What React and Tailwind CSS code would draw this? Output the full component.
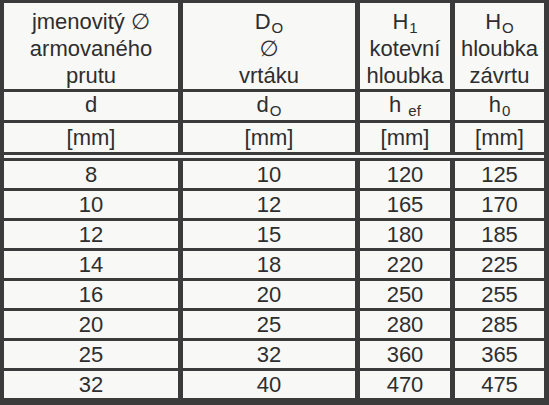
const headTop = [
  [<>jmenovitý ∅</>, <>armovaného</>, <>prutu</>],
  [<>D<Sub>O</Sub></>, <>∅</>, <>vrtáku</>],
  [<>H<Sub>1</Sub></>, <>kotevní</>, <>hloubka</>],
  [<>H<Sub>O</Sub></>, <>hloubka</>, <>závrtu</>],
];

const symbols = [
  <>d</>,
  <>d<Sub>O</Sub></>,
  <>h<span className="ml-[7px] text-[15px] leading-none relative top-[4px]">ef</span></>,
  <>h<Sub>0</Sub></>,
];

const rows = [
  [8, 10, 120, 125],
  [10, 12, 165, 170],
  [12, 15, 180, 185],
  [14, 18, 220, 225],
  [16, 20, 250, 255],
  [20, 25, 280, 285],
  [25, 32, 360, 365],
  [32, 40, 470, 475],
];

function Sub({ children }) {
  return <span className="text-[15px] leading-none relative top-[4px] ml-[1px]">{children}</span>;
}

function Cell({ children, className = '' }) {
  return (
    <div className={`bg-[#f8f8f7] flex flex-col items-center justify-center text-center ${className}`}>
      {children}
    </div>
  );
}

export default function App() {
  return (
    <div
      className="w-[549px] h-[405px] overflow-hidden bg-[#3b3b3b] pt-[3px] pl-[4px] pr-[5px] flex flex-col text-[#2e2e2e] text-[22px] leading-[28px]"
      style={{ fontFamily: '"Liberation Sans", Arial, "DejaVu Sans", sans-serif' }}
    >
      {/* header */}
      <div className="grid grid-cols-[174px_172px_90px_89px] grid-rows-[86px_28px_29px] gap-x-[5px] gap-y-[3px]">
        {headTop.map((lines, i) => (
          <Cell key={`t-${i}`} className="pt-[4px]">
            {lines.map((l, j) => (
              <div key={j} className="h-[27px] whitespace-nowrap">{l}</div>
            ))}
          </Cell>
        ))}
        {symbols.map((s, i) => (
          <Cell key={`s-${i}`}>
            <div className="whitespace-nowrap -mt-[3px]">{s}</div>
          </Cell>
        ))}
        {[0, 1, 2, 3].map(i => (
          <Cell key={`u-${i}`}>[mm]</Cell>
        ))}
      </div>

      {/* double rule */}
      <div className="mt-[3px] h-[3px] bg-[#f4f4f4]" />

      {/* body */}
      <div className="mt-[3px] grid grid-cols-[174px_172px_90px_89px] auto-rows-[27px] gap-x-[5px] gap-y-[3px]">
        {rows.map((r, i) =>
          r.map((v, j) => (
            <Cell key={`${i}-${j}`} className={j === 3 ? 'bg-[#f1f3f6]' : ''}>
              {v}
            </Cell>
          ))
        )}
      </div>
    </div>
  );
}
